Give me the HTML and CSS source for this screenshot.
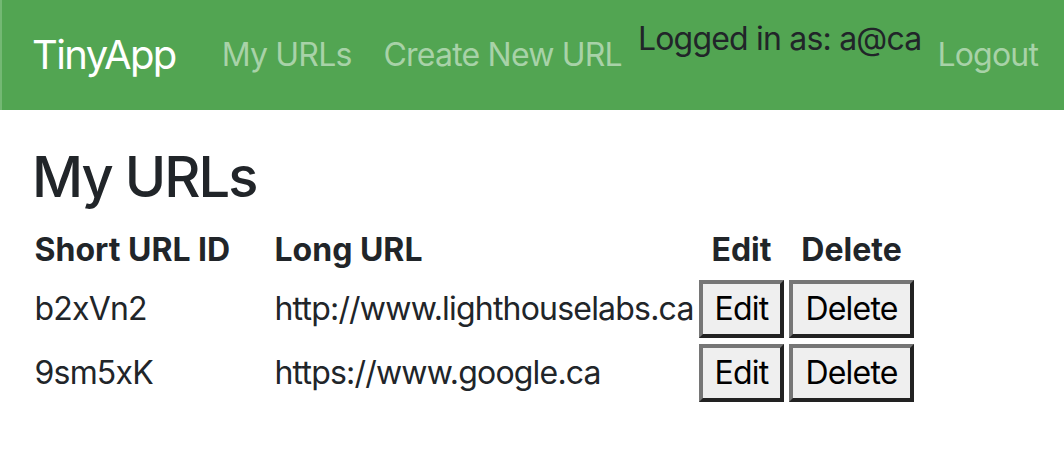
FILE: index.html
```html
<!DOCTYPE html>
<html lang="en">
<head>
<meta charset="utf-8">
<title>TinyApp</title>
<link rel="stylesheet" href="styles.css">
</head>
<body>
<nav class="navbar">
  <a class="brand" href="#">TinyApp</a>
  <div class="nav-links">
    <a class="nav-link" href="#">My URLs</a>
    <a class="nav-link" href="#">Create New URL</a>
  </div>
  <span class="user">Logged in as: a@ca</span>
  <a class="nav-link logout" href="#">Logout</a>
</nav>
<main class="container">
  <h3 class="title">My URLs</h3>
  <table class="urls">
    <thead>
      <tr>
        <th class="col-id">Short URL ID</th>
        <th class="col-long">Long URL</th>
        <th class="col-btn">Edit</th>
        <th class="col-btn">Delete</th>
      </tr>
    </thead>
    <tbody>
      <tr>
        <td>b2xVn2</td>
        <td>http://www.lighthouselabs.ca</td>
        <td><button class="btn">Edit</button></td>
        <td><button class="btn">Delete</button></td>
      </tr>
      <tr>
        <td>9sm5xK</td>
        <td>https://www.google.ca</td>
        <td><button class="btn">Edit</button></td>
        <td><button class="btn">Delete</button></td>
      </tr>
    </tbody>
  </table>
</main>
</body>
</html>
```
FILE: styles.css
```css
* { box-sizing: border-box; }
body {
  margin: 0;
  font-family: Inter, "Liberation Sans", sans-serif;
  font-size: 32px;
  line-height: 1.5;
  letter-spacing: -0.025em;
  color: #212529;
  background: #fff;
}
.navbar {
  height: 110px;
  background: #52a552;
  border-left: 2px solid #74b874;
  padding: 16px 30px;
  display: flex;
  align-items: center;
  white-space: nowrap;
}
.brand {
  font-size: 40px;
  letter-spacing: -0.04em;
  color: #fff;
  text-decoration: none;
  margin-right: 30px;
  line-height: 1.5;
}
.nav-links { display: flex; }
.nav-link {
  color: #a8d2a8;
  text-decoration: none;
  padding: 0 16px;
  line-height: 48px;
}
.user {
  align-self: flex-start;
  color: #212529;
  line-height: 48px;
  margin-top: -1px;
}
.container {
  padding: 34px 32px 0;
}
.title {
  margin: 0 0 12px;
  font-size: 56px;
  font-weight: 500;
  letter-spacing: -0.035em;
  line-height: 1.2;
}
.urls {
  border-collapse: collapse;
}
.urls th, .urls td {
  padding: 3px 2.5px;
  white-space: nowrap;
}
.urls th { font-weight: 700; text-align: left; letter-spacing: 0; }
.urls th.col-id { width: 240px; }
.urls th.col-btn { text-align: center; }
.btn {
  font: inherit;
  letter-spacing: -0.025em;
  color: #000;
  background: #efefef;
  line-height: 48px;
  padding: 1px 12px;
  border: 4px solid;
  border-color: #767676 #222 #222 #767676;
  border-radius: 0;
  margin: 0;
}
```
